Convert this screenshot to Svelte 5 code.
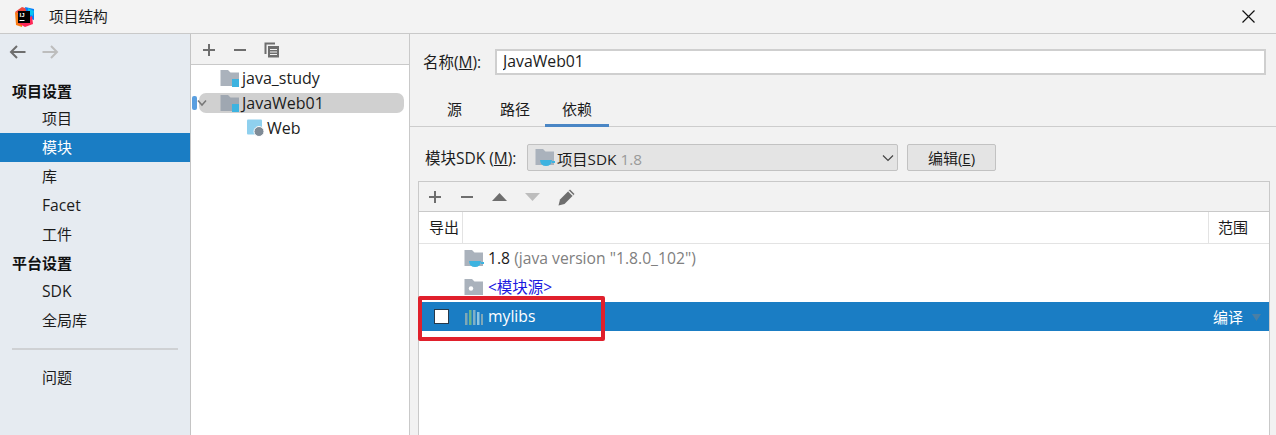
<script>
  const folder = "M0.5 1 H8 L10.500 3.500 H19 V17 H0.5 Z";
</script>

<div class="window">
  <header class="title">
    <svg class="logo" width="22" height="22" viewBox="0 0 22 22">
      <path d="M2 6 L9 1 L15 3 L9 10 Z" fill="#f0483e"/>
      <path d="M2 6 L3 19 L9 21 L10 10 Z" fill="#f97a12"/>
      <path d="M12 1 L21 3 L21 14 L15 12 Z" fill="#087cfa"/>
      <path d="M5 17 L12 21 L20 18 L19 10 Z" fill="#fe2857"/>
      <path d="M15 2 L21 5 L20 10 L15 8 Z" fill="#07c3f2"/>
      <rect x="5" y="5" width="12" height="12" fill="#000"/>
      <rect x="6.5" y="14" width="5" height="1" fill="#fff"/>
      <text x="6.5" y="11" class="logotext">IJ</text>
    </svg>
    <span class="title-text">项目结构</span>
    <svg class="close" width="13" height="13" viewBox="0 0 13 13"><path d="M0.500 0.500 L12.500 12.500 M12.500 0.500 L0.500 12.500" stroke="#111" stroke-width="1.200" fill="none"/></svg>
  </header>

  <div class="body">
    <aside class="side">
      <div class="nav-arrows">
        <svg width="17" height="14" viewBox="0 0 17 14"><path d="M16.500 7 H2 M8 1 L2 7 L8 13" stroke="#6e6e6e" stroke-width="2" fill="none"/></svg>
        <svg width="17" height="14" viewBox="0 0 17 14"><path d="M0.500 7 H15 M9 1 L15 7 L9 13" stroke="#bdbdbd" stroke-width="2" fill="none"/></svg>
      </div>
      <div class="sec first">项目设置</div>
      <div class="item">项目</div>
      <div class="item sel">模块</div>
      <div class="item">库</div>
      <div class="item latin">Facet</div>
      <div class="item">工件</div>
      <div class="sec">平台设置</div>
      <div class="item latin">SDK</div>
      <div class="item">全局库</div>
      <div class="sep"></div>
      <div class="item">问题</div>
    </aside>

    <section class="mid">
      <div class="mid-tools">
        <svg width="14" height="14" viewBox="0 0 14 14"><path d="M7 1 V13 M1 7 H13" stroke="#6e6e6e" stroke-width="2"/></svg>
        <svg width="14" height="14" viewBox="0 0 14 14"><path d="M1 7 H13" stroke="#6e6e6e" stroke-width="2"/></svg>
        <svg width="16" height="16" viewBox="0 0 16 16"><path d="M1.500 12 V1.500 H11" stroke="#6e6e6e" stroke-width="2" fill="none"/><rect x="4" y="4" width="11" height="11.500" fill="#6e6e6e"/><path d="M6 7.500 H13 M6 10 H13 M6 12.500 H13" stroke="#f2f2f2" stroke-width="1"/></svg>
      </div>
      <div class="tree">
        <div class="node n1">
          <svg class="ic" width="22" height="18" viewBox="0 0 22 18"><path d={folder} fill="#aab2bc"/><rect x="12" y="10" width="7" height="8" fill="#3db3e0"/></svg>
          <span>java_study</span>
        </div>
        <div class="node n1 active">
          <span class="marker"></span>
          <svg class="chev" width="10" height="8" viewBox="0 0 10 8"><path d="M1 1.500 L5 6 L9 1.500" stroke="#777" stroke-width="1.500" fill="none"/></svg>
          <svg class="ic" width="22" height="18" viewBox="0 0 22 18"><path d={folder} fill="#9fa7b1"/><rect x="12" y="10" width="7" height="8" fill="#3db3e0"/></svg>
          <span>JavaWeb01</span>
        </div>
        <div class="node n2">
          <svg class="ic" width="20" height="18" viewBox="0 0 20 18"><rect x="0" y="0.500" width="15" height="15" rx="1" fill="#8fd0ee"/><circle cx="12" cy="12.500" r="5" fill="#7f8b96" stroke="#fff"/></svg>
          <span>Web</span>
        </div>
      </div>
    </section>

    <main class="right">
      <div class="name-row">
        <label class="name-label" for="nm">名称(<u>M</u>):</label>
        <input id="nm" class="name-input" value="JavaWeb01" />
      </div>

      <nav class="tabs">
        <span class="tab">源</span>
        <span class="tab">路径</span>
        <span class="tab on">依赖</span>
      </nav>

      <div class="sdk-row">
        <span class="sdk-label">模块SDK (<u>M</u>):</span>
        <div class="combo">
          <svg width="22" height="19" viewBox="0 0 22 19"><path d={folder} fill="#aab2bc"/><path d="M5 12 H17 Q16.500 18 11 18 Q5.500 18 5 12 Z M17 13 h3 v2 h-3 Z" fill="#3db3e0"/></svg>
          <span>项目SDK <span class="grey">1.8</span></span>
          <svg class="caret" width="12" height="8" viewBox="0 0 12 8"><path d="M1 1.500 L6 6.500 L11 1.500" stroke="#444" stroke-width="1.200" fill="none"/></svg>
        </div>
        <button class="edit">编辑(<u>E</u>)</button>
      </div>

      <div class="table">
        <div class="t-tools">
          <svg width="14" height="14" viewBox="0 0 14 14"><path d="M7 1 V13 M1 7 H13" stroke="#6e6e6e" stroke-width="2"/></svg>
          <svg width="14" height="14" viewBox="0 0 14 14"><path d="M1 7 H13" stroke="#6e6e6e" stroke-width="2"/></svg>
          <svg width="15" height="10" viewBox="0 0 15 10"><path d="M7.500 1 L15 9 H0 Z" fill="#6e6e6e"/></svg>
          <svg width="15" height="10" viewBox="0 0 15 10"><path d="M7.500 9 L15 1 H0 Z" fill="#bdbdbd"/></svg>
          <svg width="18" height="18" viewBox="0 0 18 18"><path d="M0.500 17.500 L2 11.500 L12 1.500 L16.500 6 L6.500 16 Z" fill="#6e6e6e"/><path d="M10.500 3 L15 7.500" stroke="#f2f2f2" stroke-width="1.200"/></svg>
        </div>
        <div class="t-head">
          <span class="h1">导出</span>
          <span class="h2"></span>
          <span class="h3">范围</span>
        </div>
        <div class="row">
          <svg class="ric" width="22" height="19" viewBox="0 0 22 19"><path d={folder} fill="#aab2bc"/><path d="M5 12 H17 Q16.500 18 11 18 Q5.500 18 5 12 Z M17 13 h3 v2 h-3 Z" fill="#3db3e0"/></svg>
          <span>1.8 <span class="grey2">(java version "1.8.0_102")</span></span>
        </div>
        <div class="row">
          <svg class="ric" width="22" height="19" viewBox="0 0 22 19"><path d={folder} fill="#aab2bc"/><circle cx="7" cy="10.500" r="2.200" fill="#fff"/></svg>
          <span class="src">&lt;模块源&gt;</span>
        </div>
        <div class="row picked">
          <span class="check"></span>
          <svg class="lib" width="22" height="18" viewBox="0 0 22 18">
            <rect x="1" y="5" width="2.500" height="12" fill="#7fa8b8"/><rect x="5" y="2" width="2.500" height="15" fill="#6fb58a"/><rect x="9" y="2" width="2.500" height="15" fill="#7fb0c8"/><rect x="13" y="4" width="2.500" height="13" fill="#8fc6e0"/><rect x="17" y="6" width="2" height="11" fill="#7fa8b8"/>
          </svg>
          <span class="lib-name">mylibs</span>
          <span class="scope">编译</span>
          <svg class="scope-caret" width="9" height="7" viewBox="0 0 9 7"><path d="M0 0 H9 L4.500 7 Z" fill="#4a7fa5"/></svg>
        </div>
        <div class="rest"></div>
      </div>
    </main>
  </div>

  <div class="redbox"></div>
</div>

<style>
  :global(body) { margin: 0; }
  .window {
    position: relative;
    width: 1276px;
    height: 435px;
    overflow: hidden;
    background: #f2f2f2;
    font-family: "Open Sans", "Noto Sans CJK SC", sans-serif;
    font-size: 15px;
    color: #1c1c1c;
    display: flex;
    flex-direction: column;
  }
  .title {
    height: 33px;
    flex: none;
    display: flex;
    align-items: center;
    padding-left: 13px;
    border-bottom: 1px solid #c9c9c9;
    background: #f3f3f3;
    box-sizing: content-box;
  }
  .logotext { font: bold 6px "Liberation Sans", sans-serif; fill: #fff; }
  .title-text { margin-left: 14px; font-size: 14.700px; margin-bottom: 2px; }
  .close { margin-left: auto; margin-right: 21px; }
  .body { flex: 1; display: flex; min-height: 0; }

  .side {
    width: 190px;
    flex: none;
    background: #e6ebf1;
    border-right: 1px solid #c4c4c4;
    display: flex;
    flex-direction: column;
  }
  .nav-arrows { display: flex; gap: 16px; padding: 11px 0 0 9px; height: 32px; box-sizing: border-box; align-items: flex-start; }
  .sec { font-weight: 700; height: 28px; line-height: 28px; padding-left: 12px; font-size: 15px; color: #111; }
  .sec.first { margin-top: 12px; height: 26px; line-height: 26px; }
  .item { height: 29px; line-height: 29px; padding-left: 42px; font-size: 15px; }
  .item.latin { font-size: 15.700px; }
  .item.sel { background: #1a7dc4; color: #fff; }
  .sep { height: 2px; background: #cfd1d4; margin: 13px 12px 13px 12px; }

  .mid { width: 218px; flex: none; background: #fff; border-right: 1px solid #c9c9c9; display: flex; flex-direction: column; }
  .mid-tools {
    height: 31px; background: #f2f2f2; border-bottom: 1px solid #c9c9c9;
    display: flex; align-items: center; gap: 17px; padding: 1px 0 0 11px; box-sizing: border-box; flex: none;
  }
  .tree { display: flex; flex-direction: column; }
  .node { position: relative; height: 25px; display: flex; align-items: center; font-size: 16px; }
  .n1 { padding-left: 29px; }
  .n1 .ic { width: 22px; flex: none; }
  .n2 { padding-left: 56px; }
  .active { background: #d0d0d0; border-radius: 7px; margin: 2.500px 5px 2.500px 8px; padding-left: 21px; height: 20px; }
  .marker { position: absolute; left: -7px; top: 3px; width: 5px; height: 14px; border-radius: 2px; background: #5a9fe0; }
  .chev { position: absolute; left: -2px; top: 6px; }

  .right { flex: 1; display: flex; flex-direction: column; min-width: 0; }
  .name-row { display: flex; align-items: center; height: 26px; margin-top: 15px; padding-left: 13px; }
  .name-label { width: 72px; flex: none; font-size: 15.500px; margin-bottom: 2px; }
  .name-input {
    width: 771px; height: 26px; box-sizing: border-box; border: 2px solid #cfcfcf; background: #fff;
    font: 15.800px "Open Sans", sans-serif; padding: 0 6px 2px; color: #1c1c1c; outline: none;
  }
  .tabs { display: flex; height: 36px; margin-top: 15px; border-bottom: 1px solid #cdcdcd; padding-left: 22px; box-sizing: content-box; flex: none; }
  .tab { padding: 0 15px; line-height: 39px; height: 36px; box-sizing: border-box; font-size: 15px; }
  .tab + .tab { margin-left: 8px; }
  .tab.on { border-bottom: 3px solid #4a86c5; height: 37px; padding: 0 17px; margin-left: 0; }
  .sdk-row { display: flex; align-items: center; height: 27px; margin-top: 17px; padding-left: 15px; flex: none; }
  .sdk-label { width: 102px; flex: none; font-size: 15.500px; margin-bottom: 1px; }
  .combo {
    width: 371px; height: 27px; box-sizing: border-box; background: #e4e4e4; border: 1px solid #c2c2c2; border-radius: 2px;
    display: flex; align-items: center; padding-left: 7px; gap: 0; font-size: 15.300px;
  }
  .grey { color: #9a9a9a; }
  .caret { margin-left: auto; margin-right: 3px; }
  .edit {
    margin-left: 9px; width: 89px; height: 27px; background: #e4e4e4; border: 1px solid #c2c2c2; border-radius: 2px;
    font: inherit; color: inherit; padding: 0;
  }
  .table {
    margin: 10px 0 0 8px; width: 852px; box-sizing: border-box; flex: 1; border: 1px solid #c9c9c9; border-bottom: 0;
    display: flex; flex-direction: column; background: #fff;
  }
  .t-tools {
    height: 30px; flex: none; background: #f2f2f2; border-bottom: 1px solid #c9c9c9; display: flex; align-items: center; gap: 18px; padding-left: 9px; box-sizing: border-box;
  }
  .t-head { height: 32px; flex: none; display: flex; align-items: center; border-bottom: 1px solid #e3e3e3; box-sizing: border-box; font-size: 15px; }
  .h1 { width: 44px; box-sizing: border-box; padding-left: 10px; height: 100%; line-height: 31px; border-right: 1px solid #e3e3e3; }
  .h2 { flex: 1; }
  .h3 { width: 61px; box-sizing: border-box; padding-left: 9px; height: 100%; line-height: 31px; border-left: 1px solid #e3e3e3; }
  .row { height: 29px; flex: none; display: flex; align-items: center; padding-left: 45px; font-size: 15.700px; position: relative; }
  .row > span { margin-bottom: 1px; }
  .ric { margin-right: 2px; flex: none; }
  .grey2 { color: #808080; }
  .row > .src { color: #1a1ae0; font-size: 15.500px; margin-bottom: 2px; }
  .picked { background: #1a7dc4; color: #fff; padding-left: 15px; }
  .row > .check { width: 15px; height: 15px; background: #fff; border: 1px solid #27394a; flex: none; box-sizing: border-box; margin: 0 15px 0 0; }
  .lib { flex: none; margin-right: 2px; }
  .scope { margin-left: auto; margin-right: 26px; font-size: 15px; }
  .scope-caret { position: absolute; right: 8px; top: 12px; }
  .rest { flex: 1; background: #fff; }
  .redbox {
    position: absolute; left: 418px; top: 296px; width: 187px; height: 45px; box-sizing: border-box;
    border: 4px solid #e0202c; border-radius: 2px;
  }
</style>
